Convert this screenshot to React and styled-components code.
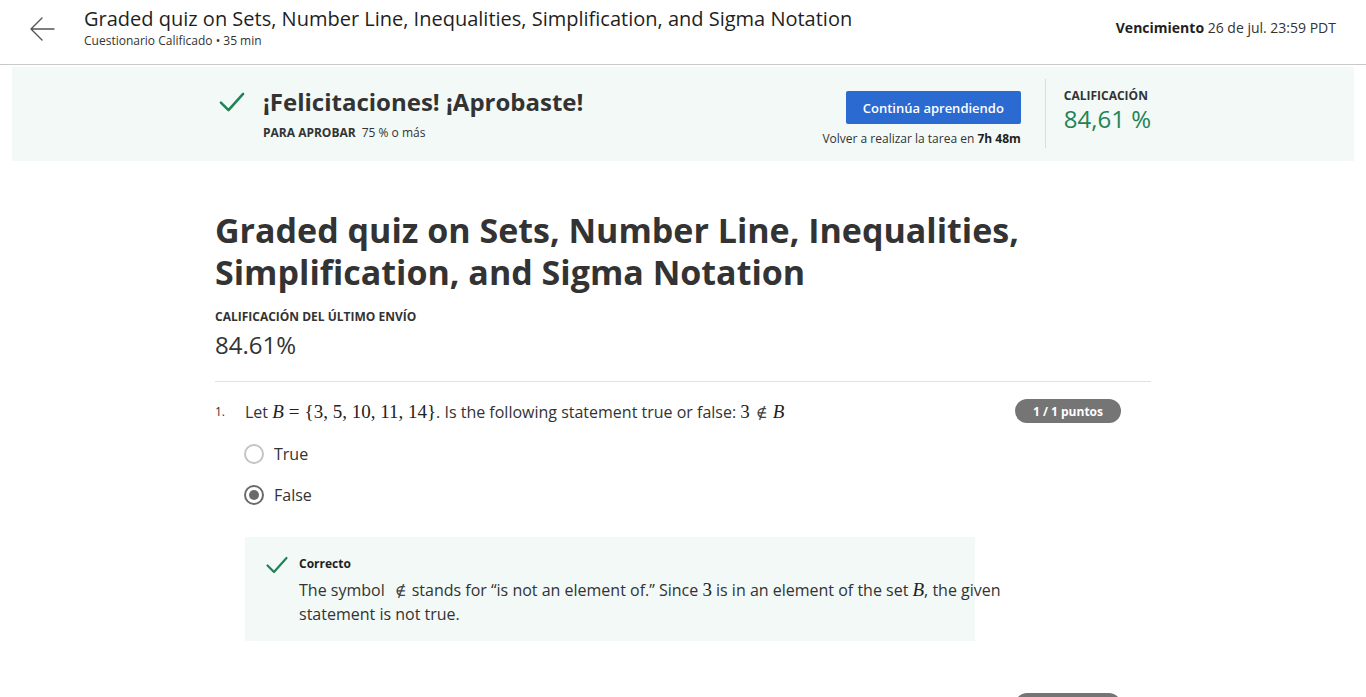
import React from "react";
import styled, { createGlobalStyle } from "styled-components";

const Global = createGlobalStyle`
  html, body { margin: 0; padding: 0; background: #fff; }
  body { font-family: "Open Sans", "Noto Sans", sans-serif; color: #1f1f1f; overflow: hidden; }
  * { box-sizing: border-box; }
`;

const Page = styled.div`
  width: 1366px;
  height: 697px;
  overflow: hidden;
`;

const Header = styled.header`
  height: 65px;
  border-bottom: 1px solid #c9c9c9;
  display: flex;
  align-items: flex-start;
  padding: 0 30px 0 28px;
`;

const BackButton = styled.button`
  border: 0;
  background: none;
  padding: 0;
  margin-top: 15px;
  width: 28px;
  height: 28px;
  display: flex;
  align-items: center;
  justify-content: center;
  color: #555;
  cursor: pointer;
`;

const HeaderTitles = styled.div`
  margin-left: 28px;
  margin-top: 6px;
  flex: 1;
  display: flex;
  flex-direction: column;
`;

const HeaderTitle = styled.h1`
  margin: 0;
  font-size: 20px;
  font-weight: 400;
  line-height: 26px;
  color: #1f1f1f;
`;

const HeaderSub = styled.div`
  font-size: 12px;
  line-height: 18px;
  color: #333;
`;

const Due = styled.div`
  margin-top: 18px;
  font-size: 14px;
  line-height: 20px;
  color: #333;
  b { font-weight: 700; color: #1f1f1f; }
`;

const Banner = styled.section`
  margin: 2px 12px 0;
  height: 94px;
  background: #f2f9f7;
  display: flex;
  justify-content: center;
`;

const BannerInner = styled.div`
  width: 936px;
  display: flex;
  align-items: stretch;
  padding: 12px 0 13px;
`;

const BannerLeft = styled.div`
  flex: 1;
  display: flex;
  align-items: flex-start;
  padding-top: 8px;
  padding-left: 3px;
`;

const CheckWrap = styled.div`
  width: 28px;
  height: 28px;
  margin-right: 17px;
  margin-top: 1px;
  display: flex;
  color: #1f8354;
`;

const BannerText = styled.div`
  display: flex;
  flex-direction: column;
`;

const BannerTitle = styled.div`
  font-size: 24px;
  font-weight: 700;
  line-height: 30px;
  color: #333;
`;

const PassLine = styled.div`
  margin-top: 8px;
  font-size: 12px;
  line-height: 16px;
  color: #333;
  b { font-weight: 700; margin-right: 6px; }
`;

const BannerActions = styled.div`
  display: flex;
  flex-direction: column;
  align-items: flex-end;
  padding-top: 12px;
`;

const PrimaryButton = styled.button`
  width: 175px;
  height: 36px;
  border: 0;
  border-radius: 2px;
  background: #2a6ad1;
  color: #fff;
  font-family: inherit;
  font-size: 13px;
  font-weight: 600;
  cursor: pointer;
`;

const Retry = styled.div`
  margin-top: 6px;
  font-size: 12px;
  line-height: 18px;
  color: #333;
  b { font-weight: 700; color: #1f1f1f; }
`;

const VDivider = styled.div`
  width: 1px;
  background: #dcdcdc;
  margin: 0 18px 0 24px;
`;

const Score = styled.div`
  min-width: 87px;
  padding-top: 9px;
  display: flex;
  flex-direction: column;
  white-space: nowrap;
`;

const ScoreLabel = styled.div`
  font-size: 12px;
  font-weight: 700;
  line-height: 16px;
  color: #333;
`;

const ScoreValue = styled.div`
  font-size: 24px;
  line-height: 30px;
  color: #1f8354;
`;

const Main = styled.main`
  width: 936px;
  margin: 0 auto;
  padding-top: 48px;
`;

const QuizTitle = styled.h2`
  margin: 0;
  font-size: 34px;
  line-height: 42px;
  font-weight: 700;
  color: #333;
`;

const Eyebrow = styled.div`
  margin-top: 16px;
  font-size: 12px;
  font-weight: 700;
  line-height: 16px;
  color: #333;
`;

const LastGrade = styled.div`
  margin-top: 4px;
  font-size: 24px;
  line-height: 32px;
  color: #333;
`;

const Rule = styled.hr`
  border: 0;
  border-top: 1px solid #e1e1e1;
  margin: 20px 0 0;
`;

const Question = styled.div`
  display: flex;
  align-items: flex-start;
  padding-top: ${(p) => p.$top}px;
`;

const QNum = styled.div`
  width: 30px;
  font-size: 12px;
  line-height: 24px;
  color: #333;
`;

const QBody = styled.div`
  flex: 1;
  display: flex;
  flex-direction: column;
`;

const QRow = styled.div`
  display: flex;
  align-items: flex-start;
  justify-content: space-between;
`;

const Prompt = styled.div`
  font-size: 16px;
  line-height: 24px;
  height: 24px;
  color: #333;
`;

const Badge = styled.div`
  margin-right: 30px;
  margin-top: -1px;
  width: 106px;
  height: 24px;
  border-radius: 12px;
  background: #757575;
  color: #fff;
  font-size: 12px;
  font-weight: 700;
  display: flex;
  align-items: center;
  justify-content: center;
`;

const M = styled.span`
  font-family: "Liberation Serif", "DejaVu Serif", serif;
  font-size: 19px;
  line-height: 1;
  font-style: ${(p) => (p.$italic ? "italic" : "normal")};
  color: #222;
  padding: 0 ${(p) => p.$pad || 0}px;
`;

const NotIn = styled.span`
  font-family: "DejaVu Serif", serif;
  font-size: 16px;
  line-height: 1;
  font-weight: 300;
  color: #444;
  padding: 0 5px 0 6px;
`;

const Options = styled.div`
  margin-top: 18px;
  display: flex;
  flex-direction: column;
  gap: 17px;
`;

const Option = styled.label`
  display: flex;
  align-items: center;
  gap: 10px;
  font-size: 16px;
  line-height: 24px;
  color: #333;
`;

const Radio = styled.span`
  width: 20px;
  height: 20px;
  border-radius: 50%;
  border: 2px solid ${(p) => (p.$checked ? "#6b6b6b" : "#c4c4c4")};
  display: flex;
  align-items: center;
  justify-content: center;
  margin-left: -1px;
  &::after {
    content: "";
    width: 10px;
    height: 10px;
    border-radius: 50%;
    background: #6b6b6b;
    display: ${(p) => (p.$checked ? "block" : "none")};
  }
`;

const Feedback = styled.div`
  margin-top: 30px;
  width: 730px;
  background: #f2f9f7;
  padding: 16px 20px 15px 20px;
  display: flex;
  align-items: flex-start;
`;

const SmallCheck = styled.div`
  width: 24px;
  height: 24px;
  margin-right: 10px;
  color: #1f8354;
  display: flex;
`;

const FeedbackBody = styled.div`
  flex: 1;
  display: flex;
  flex-direction: column;
  padding-top: 3px;
`;

const FeedbackTitle = styled.div`
  font-size: 12px;
  font-weight: 700;
  line-height: 16px;
  color: #1f1f1f;
`;

const FeedbackText = styled.div`
  margin-top: 6px;
  font-size: 16px;
  line-height: 24px;
  color: #333;
  width: 710px;
`;

const Check = ({ size }) => (
  <svg width={size} height={size} viewBox="0 0 24 24" fill="none">
    <path d="M2.5 12.5 L9 19 L21.5 5" stroke="currentColor" strokeWidth="2.2" strokeLinecap="round" strokeLinejoin="round" />
  </svg>
);

export default function App() {
  return (
    <Page>
      <Global />
      <Header>
        <BackButton aria-label="Atrás">
          <svg width="26" height="26" viewBox="0 0 26 26" fill="none">
            <path d="M25 13 H2 M13 2 L2 13 L13 24" stroke="#555" strokeWidth="1.4" strokeLinecap="round" strokeLinejoin="round" />
          </svg>
        </BackButton>
        <HeaderTitles>
          <HeaderTitle>Graded quiz on Sets, Number Line, Inequalities, Simplification, and Sigma Notation</HeaderTitle>
          <HeaderSub>Cuestionario Calificado • 35 min</HeaderSub>
        </HeaderTitles>
        <Due>
          <b>Vencimiento</b> 26 de jul. 23:59 PDT
        </Due>
      </Header>

      <Banner>
        <BannerInner>
          <BannerLeft>
            <CheckWrap>
              <Check size={28} />
            </CheckWrap>
            <BannerText>
              <BannerTitle>¡Felicitaciones! ¡Aprobaste!</BannerTitle>
              <PassLine>
                <b>PARA APROBAR</b>75 % o más
              </PassLine>
            </BannerText>
          </BannerLeft>
          <BannerActions>
            <PrimaryButton>Continúa aprendiendo</PrimaryButton>
            <Retry>
              Volver a realizar la tarea en <b>7h 48m</b>
            </Retry>
          </BannerActions>
          <VDivider />
          <Score>
            <ScoreLabel>CALIFICACIÓN</ScoreLabel>
            <ScoreValue>84,61 %</ScoreValue>
          </Score>
        </BannerInner>
      </Banner>

      <Main>
        <QuizTitle>
          Graded quiz on Sets, Number Line, Inequalities, Simplification, and Sigma Notation
        </QuizTitle>
        <Eyebrow>CALIFICACIÓN DEL ÚLTIMO ENVÍO</Eyebrow>
        <LastGrade>84.61%</LastGrade>
        <Rule />

        <Question $top={18}>
          <QNum>1.</QNum>
          <QBody>
            <QRow>
              <Prompt>
                Let <M $italic>B</M>
                <M $pad={5}>=</M>
                <M>{"{3, 5, 10, 11, 14}"}</M>. Is the following statement true or false: <M>3</M>
                <NotIn>∉</NotIn>
                <M $italic>B</M>
              </Prompt>
              <Badge>1 / 1 puntos</Badge>
            </QRow>
            <Options>
              <Option>
                <Radio />
                True
              </Option>
              <Option>
                <Radio $checked />
                False
              </Option>
            </Options>
            <Feedback>
              <SmallCheck>
                <Check size={24} />
              </SmallCheck>
              <FeedbackBody>
                <FeedbackTitle>Correcto</FeedbackTitle>
                <FeedbackText>
                  The symbol <NotIn>∉</NotIn>stands for “is not an element of.” Since <M>3</M> is in an element of the set <M $italic>B</M>, the given statement is not true.
                </FeedbackText>
              </FeedbackBody>
            </Feedback>
          </QBody>
        </Question>

        <Question $top={53}>
          <QNum>2.</QNum>
          <QBody>
            <QRow>
              <Prompt>&nbsp;</Prompt>
              <Badge>1 / 1 puntos</Badge>
            </QRow>
          </QBody>
        </Question>
      </Main>
    </Page>
  );
}
